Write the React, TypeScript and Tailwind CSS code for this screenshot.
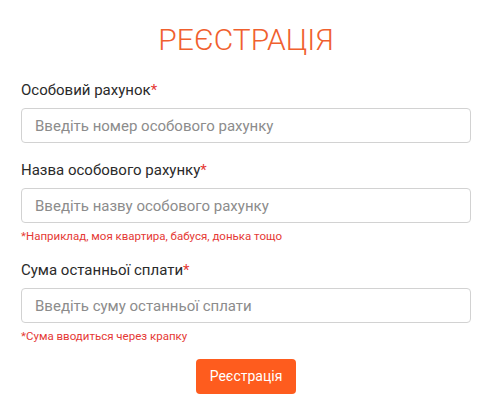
import React from 'react';

const font = { fontFamily: 'Roboto, "Noto Sans", sans-serif' };

function Field({ label, placeholder, hint }: { label: string; placeholder: string; hint?: string }) {
  return (
    <div className="flex flex-col">
      <label className="text-[15px] leading-[20px] text-[#2a2a2a]">
        {label}
        <span className="text-[#e53935]">*</span>
      </label>
      <input
        className="mt-2 h-[35px] w-full rounded-[4px] border border-[#d2d2d2] px-[13px] text-[15px] text-[#222] placeholder:text-[#8c8c8c] outline-none"
        placeholder={placeholder}
      />
      {hint && <p className="mt-[6px] text-[11.5px] leading-[14px] text-[#e53935]">{hint}</p>}
    </div>
  );
}

export default function App() {
  return (
    <div className="min-h-screen bg-white px-[21px] pt-[20px]" style={font}>
      <h1 className="w-[450px] text-center text-[30px] leading-[40px] font-light text-[#f0602e]">РЕЄСТРАЦІЯ</h1>
      <div className="mt-[20px] flex flex-col gap-[17px] w-[450px]">
        <Field label="Особовий рахунок" placeholder="Введіть номер особового рахунку" />
        <Field
          label="Назва особового рахунку"
          placeholder="Введіть назву особового рахунку"
          hint="*Наприклад, моя квартира, бабуся, донька тощо"
        />
        <Field
          label="Сума останньої сплати"
          placeholder="Введіть суму останньої сплати"
          hint="*Сума вводиться через крапку"
        />
      </div>
      <div className="mt-[16px] flex justify-center w-[450px]">
        <button className="h-[35px] w-[100px] rounded-[4px] bg-[#fe5c1e] text-[14px] text-white">Реєстрація</button>
      </div>
    </div>
  );
}
